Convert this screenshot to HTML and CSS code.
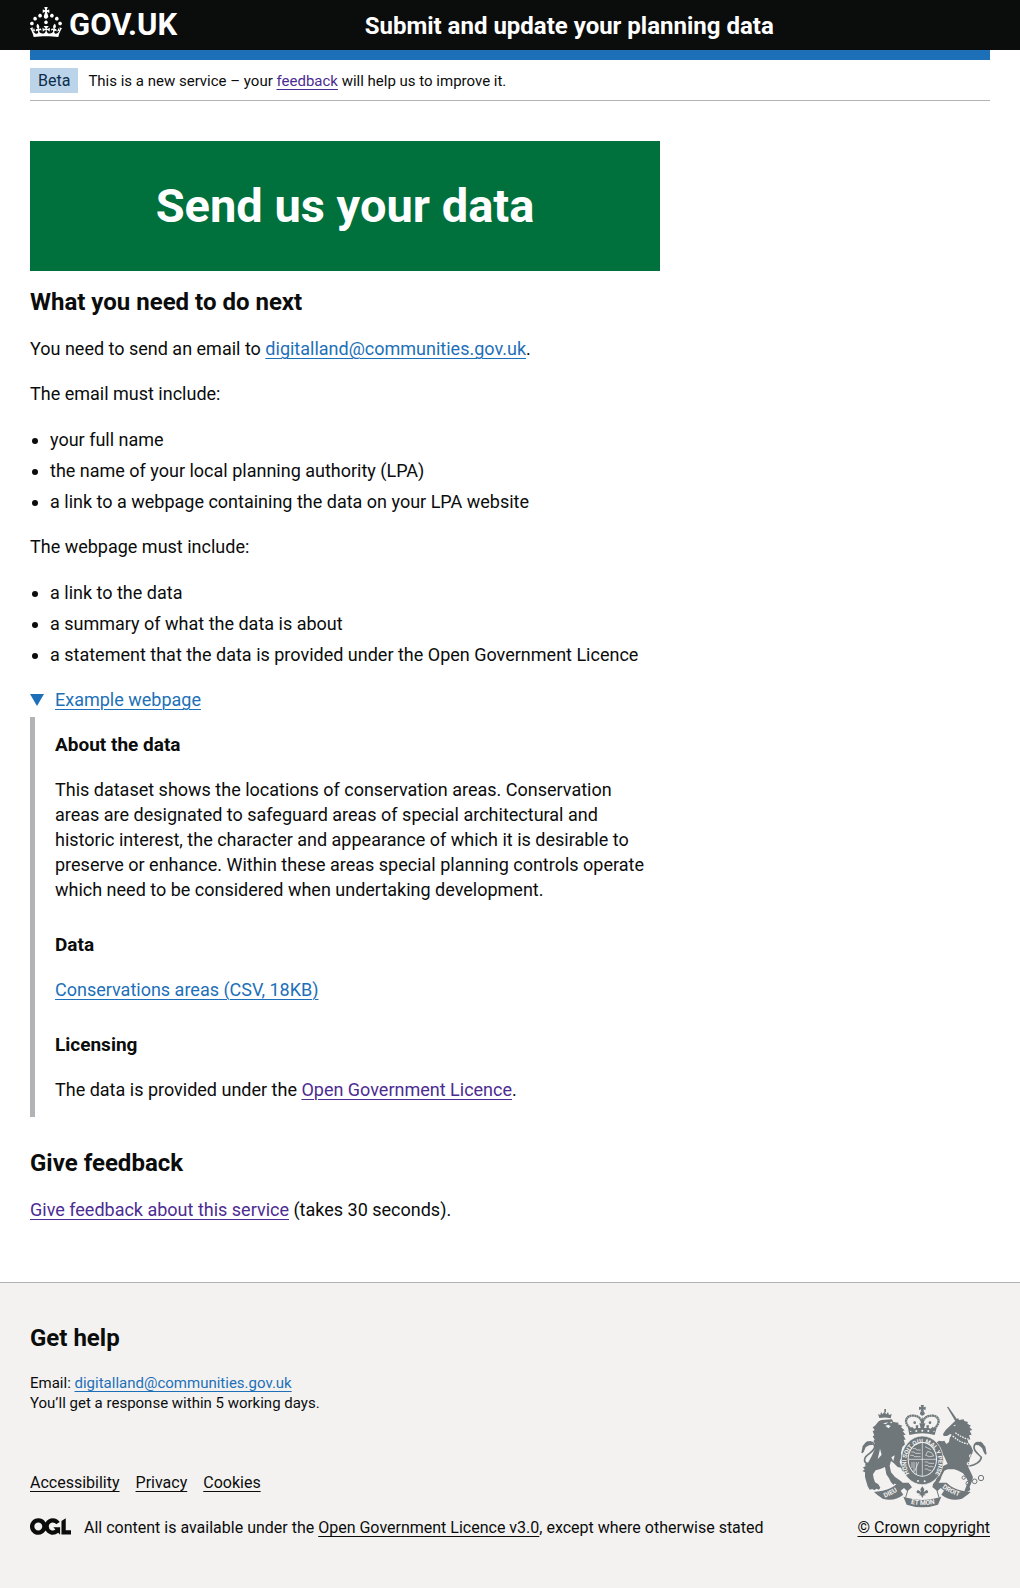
FILE: index.html
```html
<!DOCTYPE html>
<html lang="en">
<head>
<meta charset="utf-8">
<meta name="viewport" content="width=device-width, initial-scale=1">
<title>Send us your data - Submit and update your planning data</title>
<link rel="stylesheet" href="styles.css">
</head>
<body>
<header class="header">
  <div class="container header-inner">
    <a class="brand" href="#">
      <svg class="crown" viewBox="0 0 32 30" width="32" height="30" aria-hidden="true"><path fill="currentColor" d="M22.6 10.4c-1 .4-2-.1-2.4-1-.4-.9.1-2 1-2.4.9-.4 2 .1 2.4 1s-.1 2-1 2.4m-5.9 6.7c-.9.4-2-.1-2.4-1-.4-.9.1-2 1-2.4.9-.4 2 .1 2.4 1s-.1 2-1 2.4m10.8-3.7c-1 .4-2-.1-2.4-1-.4-.9.1-2 1-2.4.9-.4 2 .1 2.4 1s0 2-1 2.4m3.3 4.8c-1 .4-2-.1-2.4-1-.4-.9.1-2 1-2.4.9-.4 2 .1 2.4 1s-.1 2-1 2.4M17 4.7l2.3 1.2V2.5l-2.3.7-.2-.2.9-3h-3.4l.9 3-.2.2c-.1.1-2.3-.7-2.3-.7v3.4L15 4.7c.1.1.1.2.2.2l-1.3 4c-.1.2-.1.4-.1.6 0 1.1.8 2 1.9 2.2h.7c1-.2 1.9-1.1 1.9-2.1 0-.2 0-.4-.1-.6l-1.3-4c-.1-.2 0-.2.1-.3m-7.6 5.7c.9.4 2-.1 2.4-1 .4-.9-.1-2-1-2.4-.9-.4-2 .1-2.4 1s0 2 1 2.4m-5 3c.9.4 2-.1 2.4-1 .4-.9-.1-2-1-2.4-.9-.4-2 .1-2.4 1s.1 2 1 2.4m-3.2 4.8c.9.4 2-.1 2.4-1 .4-.9-.1-2-1-2.4-.9-.4-2 .1-2.4 1s0 2 1 2.4m14.8 11c4.4 0 8.6.3 12.3.8 1.1-4.5 2.4-7 3.7-8.8l-2.5-.9c.2 1.3.3 1.9 0 2.7-.4-.4-.8-1.1-1.1-2.3l-1.2 4c.7-.5 1.3-.8 2-.9-1.1 2.5-2.6 3.1-3.5 3-1.1-.2-1.7-1.2-1.5-2.1.3-1.2 1.5-1.5 2.1-.1 1.1-2.3-.8-3-2-2.3 1.9-1.9 2.1-3.5.6-5.6-2.1 1.6-2.1 3.2-1.2 5.5-1.2-1.4-3.2-.6-2.5 1.6.9-1.4 2.1-.5 1.9.8-.2 1.1-1.7 2.1-3.5 1.9-2.7-.2-2.9-2.1-2.9-3.6.7-.1 1.9.5 2.9 1.9l.4-4.3c-1.1 1.1-2.1 1.4-3.2 1.4.4-1.2 2.1-3 2.1-3h-5.4s1.7 1.9 2.1 3c-1.1 0-2.1-.2-3.2-1.4l.4 4.3c1-1.4 2.2-2 2.9-1.9-.1 1.5-.2 3.4-2.9 3.6-1.9.2-3.4-.8-3.5-1.9-.2-1.3 1-2.2 1.9-.8.7-2.3-1.2-3-2.5-1.6.9-2.2.9-3.9-1.2-5.5-1.5 2-1.3 3.7.6 5.6-1.2-.7-3.1 0-2 2.3.6-1.4 1.8-1.1 2.1.1.2.9-.3 1.9-1.5 2.1-.9.2-2.4-.5-3.5-3 .6 0 1.2.3 2 .9l-1.2-4c-.3 1.1-.7 1.9-1.1 2.3-.3-.8-.2-1.4 0-2.7l-2.9.9C1.3 23 2.6 25.5 3.7 30c3.7-.5 7.9-.8 12.3-.8"/></svg>
      <span>GOV.UK</span>
    </a>
    <a class="service-name" href="#">Submit and update your planning data</a>
  </div>
</header>

<div class="container">
  <div class="phase-banner">
    <strong class="tag">Beta</strong>
    <span>This is a new service – your <a class="visited" href="#">feedback</a> will help us to improve it.</span>
  </div>
</div>

<main class="container main">
  <div class="column">
    <div class="panel"><h1>Send us your data</h1></div>

    <h2>What you need to do next</h2>
    <p>You need to send an email to <a href="#">digitalland@communities.gov.uk</a>.</p>
    <p>The email must include:</p>
    <ul class="list">
      <li>your full name</li>
      <li>the name of your local planning authority (LPA)</li>
      <li>a link to a webpage containing the data on your LPA website</li>
    </ul>
    <p>The webpage must include:</p>
    <ul class="list">
      <li>a link to the data</li>
      <li>a summary of what the data is about</li>
      <li>a statement that the data is provided under the Open Government Licence</li>
    </ul>

    <details class="details" open>
      <summary><svg class="arrow" viewBox="0 0 14 12" width="14" height="12" aria-hidden="true"><path fill="currentColor" d="M0 0h14L7 12z"/></svg><span>Example webpage</span></summary>
      <div class="details-text">
        <h3>About the data</h3>
        <p>This dataset shows the locations of conservation areas. Conservation areas are designated to safeguard areas of special architectural and historic interest, the character and appearance of which it is desirable to preserve or enhance. Within these areas special planning controls operate which need to be considered when undertaking development.</p>
        <h3>Data</h3>
        <p><a href="#">Conservations areas (CSV, 18KB)</a></p>
        <h3>Licensing</h3>
        <p>The data is provided under the <a class="visited" href="#">Open Government Licence</a>.</p>
      </div>
    </details>

    <h2>Give feedback</h2>
    <p><a class="visited" href="#">Give feedback about this service</a> (takes 30 seconds).</p>
  </div>
</main>

<footer class="footer">
  <div class="container footer-inner">
    <div class="footer-main">
      <h2>Get help</h2>
      <p class="contact">Email: <a class="email" href="#">digitalland@communities.gov.uk</a><br>You’ll get a response within 5 working days.</p>
      <ul class="footer-links">
        <li><a href="#">Accessibility</a></li>
        <li><a href="#">Privacy</a></li>
        <li><a href="#">Cookies</a></li>
      </ul>
      <div class="licence">
        <svg viewBox="0 0 483.2 195.7" width="41" height="17" aria-hidden="true"><path fill="currentColor" d="M421.5 142.8V.1l-50.7 32.3v161.1h112.4v-50.7zm-122.3-9.6A47.12 47.12 0 0 1 221 97.8c0-26 21.1-47.1 47.1-47.1 16.7 0 31.4 8.7 39.7 21.8l42.7-27.2A97.63 97.63 0 0 0 268.1 0c-36.5 0-68.3 20.1-85.1 49.7A98 98 0 0 0 97.8 0C43.9 0 0 43.9 0 97.8s43.9 97.8 97.8 97.8c36.5 0 68.3-20.1 85.1-49.7a97.76 97.76 0 0 0 149.6 25.4l19.4 22.2h3v-87.8h-80l24.3 27.5zM97.8 145c-26 0-47.1-21.1-47.1-47.1s21.1-47.1 47.1-47.1 47.1 21.1 47.1 47.1S123.8 145 97.8 145"/></svg>
        <span>All content is available under the <a href="#">Open Government Licence v3.0</a>, except where otherwise stated</span>
      </div>
    </div>
    <a class="crest-link" href="#">
      <svg class="crest" viewBox="35 30 378 312" width="126" height="104" aria-hidden="true">
        <defs>
          <path id="garter" d="M180 239A48 58 0 1 1 258 239"/>
          <path id="dieu" d="M106 311Q136 300 160 281"/>
          <path id="etmon" d="M184 329Q219 338 262 328"/>
          <path id="droit" d="M278 281Q304 301 343 311"/>
        </defs>
        <g class="ink">
          <!-- lion -->
          <path d="M88 82l8-4 32-2 4 8 16 2-2 5 13 4-4 5 11 9-6 2 9 12-7 0 7 14-6 0 4 14-8 8-4 18 2 10-6 16 4 12 12-2 10 6 6 10-8 2-6-4-2 8-8-4-4-10-10-2-12-12-8-6-4 14 4 20 12 14 12 8 10 8-2 6-8-4-4 4-10-2-2 4-8-8-6-12-8-12-4-22-14 6-14 4-8 12 2 12 4 12 10 6 6 10-4 6-8-3-6 5-6-4-8 2-6-10-4-14-4-14 0-14-8-4 7-4-5-7 8-3-2-8 10-4 10-18 8-18 2-20-5-8 4-4-6-10 5-3-5-12 6-4-6-8 7-5z"/>
          <path d="M90 72l-4-12 7 3 2-9 5 7 5-8 6 8 5-7 3 9 8-3-3 13q-16-5-34-1z"/>
          <path d="M105 45h5v10h-5z"/>
          <path class="line tail" d="M76 203C56 216 40 206 48 190C56 178 78 172 76 156C73 142 58 140 50 150"/>
          <path d="M36 176l4-20 10-12 6-2-1 6 10-4 8 8-14 2-10 6-6 14-4 4z"/>
          <!-- unicorn -->
          <path d="M293 39l4-1 27 39-6 5z"/>
          <path d="M318 80l8-8 3 6 14-2 2 5 11 3-2 5 11 6-5 4 9 9-8 2 6 12-8 2 4 12-8 2 2 8 8 10 6 14-4 14-6 12-2 12-2 12 8 16 6 14-4 14-6 14 2 10-10 6-8-2 6-16 6-12-6-12-10-14-14-8-12-4-20 0-10 4-8 16-4 12-8 12-8 8-8 2 2-10 8-10 4-12 4-16 10-14 12-6 6-2-4-8-6-14-6-8-12 2-6 14 12 10-2 12-8-4-10-14-8-2 0-14 6-12 8-6-4-6-6-2 2-6 10-6 8-6 10 2 6-2 6 10 8-6 2-12 6-10-4-2-10 6-10 0-2-6 8-12z"/>
          <path class="line tail" d="M360 216C376 214 394 204 396 190C388 180 372 172 374 158C377 144 390 142 400 152"/>
          <path d="M412 180l-4-22-10-12-6-4 0 6-10-4-8 8 14 2 10 8 6 14 4 6z"/>
          <circle class="line fine" cx="343" cy="251" r="5"/><circle class="line fine" cx="356" cy="268" r="6"/><circle class="line fine" cx="376" cy="262" r="7"/><circle class="line fine" cx="395" cy="252" r="8"/>
          <!-- crown -->
          <path d="M214 33h10l-2 7 7-2v10l-7-2 2 6h-10l2-6-7 2v-10l7 2z"/><circle cx="219" cy="58" r="7"/>
          <path class="line dotted" d="M186 106C160 86 170 66 188 65C206 64 215 72 219 88C223 72 232 64 250 65C268 66 278 86 252 106"/>
          <path d="M176 101l8 2 4-5 6 6 6-2-1-8h8l-1 8h8l-4-14h18l-4 14h8l-1-8h8l-1 8 6 2 6-6 4 5 8-2-6 22q-37-10-76 0z"/>
          <path d="M219 68l5 20h-10z"/><circle cx="196" cy="86" r="4"/><circle cx="242" cy="86" r="4"/>
          <!-- garter and scroll -->
          <ellipse class="edge" cx="219" cy="199" rx="63" ry="73"/>
          <path d="M74 294l26-4q28-6 46-24l32 0 10 14-14 12-10-10-10 8 8 12q-28 22-62 12-16-10-26-20z"/>
          <path d="M364 294l-26-4q-28-6-46-24l-32 0-10 14 14 12 10-10 10 8-8 12q28 22 62 12 16-10 26-20z"/>
          <path d="M162 308l14 4q43 12 86 0l14-4-10 24q-47 16-94 0z"/>
        </g>
        <g class="paper">
          <path d="M101 88l16-3-8 6zM121 84l9-1-4 5zM108 96l8-4 8 4-6 7zM126 190l10-6-4 18zM312 94l9-2-6 5zM92 164l5 18-12 14z"/>
          <ellipse cx="219" cy="196" rx="44" ry="52"/>
          <circle cx="184" cy="112" r="2"/><circle cx="201" cy="111" r="3"/><circle cx="219" cy="110" r="3"/><circle cx="237" cy="111" r="3"/><circle cx="254" cy="112" r="2"/>
          <circle cx="206" cy="261" r="3"/><circle cx="226" cy="262" r="3"/>
          <circle cx="364" cy="186" r="5"/><circle cx="357" cy="209" r="5"/>
        </g>
        <g class="ink">
          <circle cx="364" cy="186" r="2"/><circle cx="357" cy="209" r="2"/>
          <path class="line fine" d="M175 290l-6 20M263 290l6 20"/>
          <path d="M219 277l6 9-2 9 8-7q8 2 4 9l-11 3 6 4h-7l-4 8-4-8h-7l6-4-11-3q-4-7 4-9l8 7-2-9z"/>
          <ellipse cx="219" cy="196" rx="41" ry="49"/>
        </g>
        <path class="collar" d="M310 126q22 20 46 24M318 116q20 16 42 20"/>
        <g class="cuts">
          <path d="M219 147v98M178 196h82"/>
          <path d="M190 164h9l3 4h12M186 174h9l3 4h16M183 184h9l3 4h19M188 204v18M194 204v30M201 204v38M208 204l-12 28M226 204h9l3 4h16M226 214h9l3 4h14M226 225h9l3 4h8M227 158l18 9M229 184l6-12 12 4 6 10-12 2z"/>
        </g>
        <g class="motto">
          <text><textPath href="#garter">HONI SOIT QUI MAL Y PENSE</textPath></text>
          <text class="scroll"><textPath href="#dieu">DIEU</textPath></text>
          <text class="scroll"><textPath href="#etmon">ET MON</textPath></text>
          <text class="scroll"><textPath href="#droit">DROIT</textPath></text>
        </g>
      </svg>
      <span>© Crown copyright</span>
    </a>
  </div>
</footer>
</body>
</html>
```
FILE: styles.css
```css
* { box-sizing: border-box; }

body {
  margin: 0;
  background: #fff;
  color: #0b0c0c;
  font-family: Roboto, "Liberation Sans", Arial, sans-serif;
  font-size: 18px;
  line-height: 25px;
}

h1, h2, h3, p, ul { margin: 0; padding: 0; }
h2 { font-size: 24px; line-height: 30px; }
h3 { font-size: 19px; line-height: 25px; }

a {
  color: #1d70b8;
  text-decoration: underline;
  text-decoration-thickness: 1px;
  text-underline-offset: 3px;
}
a.visited { color: #4c2c92; }

.container { margin: 0 30px; }

.header { background: #0b0c0c; }
.header-inner {
  display: grid;
  grid-template-columns: 1fr 2fr;
  column-gap: 22px;
  height: 50px;
}
.header a { color: #fff; font-weight: 700; text-decoration: none; }
.brand {
  display: flex;
  align-items: flex-start;
  gap: 7px;
  padding-top: 7px;
  font-size: 31px;
  line-height: 36px;
}
.service-name { padding-top: 11px; font-size: 24px; line-height: 30px; }

.phase-banner {
  display: flex;
  align-items: center;
  gap: 10px;
  border-top: 10px solid #1d70b8;
  border-bottom: 1px solid #b1b4b6;
  padding: 8px 0 7px;
  font-size: 15px;
  line-height: 20px;
}
.tag {
  padding: 3px 8px 2px;
  background: #bbd4ea;
  color: #0c2d4a;
  font-size: 16px;
  font-weight: 400;
}

.main { padding: 40px 0; }
.column { max-width: 630px; }
.column p { margin-bottom: 20px; }
.column h2 { margin-bottom: 19px; }

.panel {
  margin-bottom: 16px;
  padding: 40px;
  background: #00703c;
  color: #fff;
  text-align: center;
}
.panel h1 { font-size: 47px; line-height: 50px; }

.list {
  margin: 21px 0 20px;
  padding-left: 20px;
}
.list li + li { margin-top: 6px; }

.details { margin-bottom: 31px; }
.details summary {
  display: flex;
  align-items: center;
  gap: 11px;
  margin-bottom: 5px;
  color: #1d70b8;
  cursor: pointer;
  list-style: none;
}
.details summary span {
  text-decoration: underline;
  text-decoration-thickness: 1px;
  text-underline-offset: 3px;
}
.details-text {
  border-left: 5px solid #b1b4b6;
  padding: 15px 12px 15px 20px;
}
.details-text h3 { margin-bottom: 20px; }
.details-text p { margin-bottom: 30px; }
.details-text p:last-child { margin-bottom: 0; }

.footer {
  border-top: 1px solid #b1b4b6;
  background: #f3f2f1;
  font-size: 16px;
  line-height: 20px;
}
.footer-inner {
  display: flex;
  align-items: flex-end;
  justify-content: space-between;
  gap: 30px;
  padding: 40px 0 50px;
}
.footer a { color: inherit; }
.footer a.email { color: #1d70b8; }
.footer h2 { margin-bottom: 20px; }
.contact { margin-bottom: 60px; font-size: 15px; }
.footer-links {
  display: flex;
  gap: 16px;
  margin-bottom: 25px;
  list-style: none;
}
.licence { display: flex; gap: 13px; }
.crest-link {
  display: flex;
  flex-direction: column;
  align-items: flex-end;
  gap: 10px;
  white-space: nowrap;
}
.crest { margin-right: 3px; }

.ink { fill: #6f777b; }
.paper { fill: #f3f2f1; }
.edge { stroke: #f3f2f1; stroke-width: 2; }
.line { fill: none; stroke: #6f777b; stroke-width: 6; }
.tail { stroke-width: 5; }
.fine { stroke-width: 3; }
.dotted { stroke-width: 7; stroke-dasharray: 6 1; }
.collar { fill: none; stroke: #f3f2f1; stroke-width: 4; stroke-dasharray: 5 3; }
.cuts { fill: none; stroke: #f3f2f1; stroke-width: 2; }
.motto { fill: #f3f2f1; font-size: 18px; font-weight: 700; }
.scroll { font-size: 20px; }
```
